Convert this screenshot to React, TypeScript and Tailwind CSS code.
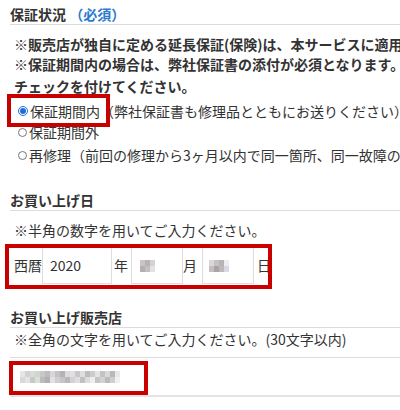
import type { ReactElement } from 'react';

const font = "font-['Noto_Sans_CJK_JP','Noto_Sans',sans-serif]";

function Mosaic({ cells }: { cells: string[][] }): ReactElement {
  return (
    <div className="flex flex-col">
      {cells.map((row, r) => (
        <div key={r} className="flex">
          {row.map((c, i) => (
            <span key={i} className="block w-[5px] h-[6px]" style={{ backgroundColor: c }} />
          ))}
        </div>
      ))}
    </div>
  );
}

const monthCells = [
  ['#c9c2c6', '#b8b1b5', '#d6d2d4'],
  ['#b5aeb2', '#c4bec1', '#e4e2e6'],
];
const dayCells = [
  ['#dcd6d8', '#c8c1c4', '#b9b3b6', '#eeeeee'],
  ['#c6bfc2', '#a9a3a6', '#bdb8c0', '#d8d8e6'],
];
const shopCells = [
  ['#e6e6e6', '#d2d0d2', '#dadada', '#cfd6cc', '#c8c8c8', '#bcbcbc', '#d8d6d8', '#c4c2c4', '#b4b2b4', '#dddcdd', '#e2dfe2', '#c9c7c9', '#dedede', '#bdbdbd', '#cccccc', '#e4e4e4', '#c3c3c3', '#d9d9d9', '#b8b8b8', '#e8e8e8'],
  ['#d8d8d8', '#e4e4e4', '#c6cac4', '#d9e0d4', '#bcbcbc', '#b0b0b0', '#e3e1e3', '#d0ced0', '#c6c4c6', '#b9b8b9', '#d4d2d4', '#e0dee0', '#c1c1c1', '#dcdcdc', '#eeeeee', '#c5c5c5', '#d2d2d2', '#bbbbbb', '#cfcfcf', '#f0f0f0'],
];

function Heading({ children }: { children: React.ReactNode }): ReactElement {
  return (
    <h2 className="pt-[4px] border-b border-[#dcdcdc] text-[14px] font-bold leading-[20px] whitespace-nowrap">
      {children}
    </h2>
  );
}

function Radio({ checked }: { checked?: boolean }): ReactElement {
  return checked ? (
    <span className="w-[10px] h-[10px] rounded-full border border-[#1c6fd6] bg-white flex items-center justify-center shrink-0">
      <span className="w-[6px] h-[6px] rounded-full bg-[#1c6fd6]" />
    </span>
  ) : (
    <span className="w-[9px] h-[9px] rounded-full border border-[#777] bg-white shrink-0" />
  );
}

export default function App(): ReactElement {
  return (
    <div className={`w-[400px] h-[410px] overflow-hidden bg-white text-[#333] pl-[10px] ${font}`}>
      <Heading>
        保証状況 <span className="text-[#2a7bcf]">（必須）</span>
      </Heading>

      <div className="pl-[4px] pt-[9px] text-[14px] font-bold whitespace-nowrap">
        <p className="leading-[20px]">※販売店が独自に定める延長保証(保険)は、本サービスに適用されません。</p>
        <p className="leading-[21px]">※保証期間内の場合は、弊社保証書の添付が必須となります。</p>
        <p className="leading-[22px] h-[22px]">チェックを付けてください。</p>
      </div>

      <div className="mt-[4px] text-[14px] whitespace-nowrap">
        <div className="relative flex items-center gap-[2px] pl-[8px] h-[20px]">
          <Radio checked />
          <span>保証期間内（弊社保証書も修理品とともにお送りください）</span>
          <div className="absolute left-[-3px] top-[-7px] w-[103px] h-[33px] border-[4px] border-[#c80000]" />
        </div>
        <div className="flex items-center gap-[2px] pl-[8px] h-[23px]">
          <Radio />
          <span>保証期間外</span>
        </div>
        <div className="flex items-center gap-[2px] pl-[8px] h-[23px]">
          <Radio />
          <span>再修理（前回の修理から3ヶ月以内で同一箇所、同一故障の場合）</span>
        </div>
      </div>

      <div className="mt-[19px]">
        <Heading>お買い上げ日</Heading>
        <p className="pl-[4px] mt-[9px] text-[14px] leading-[20px] whitespace-nowrap">※半角の数字を用いてご入力ください。</p>
        <div className="relative mt-[7px] flex items-center h-[37px] pl-[4px] text-[14px]">
          <span className="w-[28px]">西暦</span>
          <div className="w-[70px] h-[37px] border border-[#dddddd] bg-white flex items-center pl-[7px]">2020</div>
          <span className="ml-[2px] w-[17px]">年</span>
          <div className="w-[52px] h-[37px] border border-[#dddddd] bg-white flex items-center pl-[8px]">
            <Mosaic cells={monthCells} />
          </div>
          <span className="w-[19px]">月</span>
          <div className="w-[52px] h-[37px] border border-[#dddddd] bg-white flex items-center pl-[6px]">
            <Mosaic cells={dayCells} />
          </div>
          <span className="ml-[3px]">日</span>
          <div className="absolute left-[-5px] top-[-3px] w-[267px] h-[45px] border-[4px] border-[#c80000]" />
        </div>
      </div>

      <div className="mt-[19px]">
        <Heading>お買い上げ販売店</Heading>
        <p className="pl-[4px] pt-[1px] h-[30px] border-b border-[#dcdcdc] text-[14px] leading-[20px] whitespace-nowrap">
          ※全角の文字を用いてご入力ください。(30文字以内)
        </p>
        <div className="relative h-[39px] border-b-2 border-[#e4e4e4] flex items-center pl-[10px]">
          <Mosaic cells={shopCells} />
          <div className="absolute left-[-1px] top-[3px] w-[139px] h-[34px] border-[4px] border-[#c80000]" />
        </div>
      </div>
    </div>
  );
}
